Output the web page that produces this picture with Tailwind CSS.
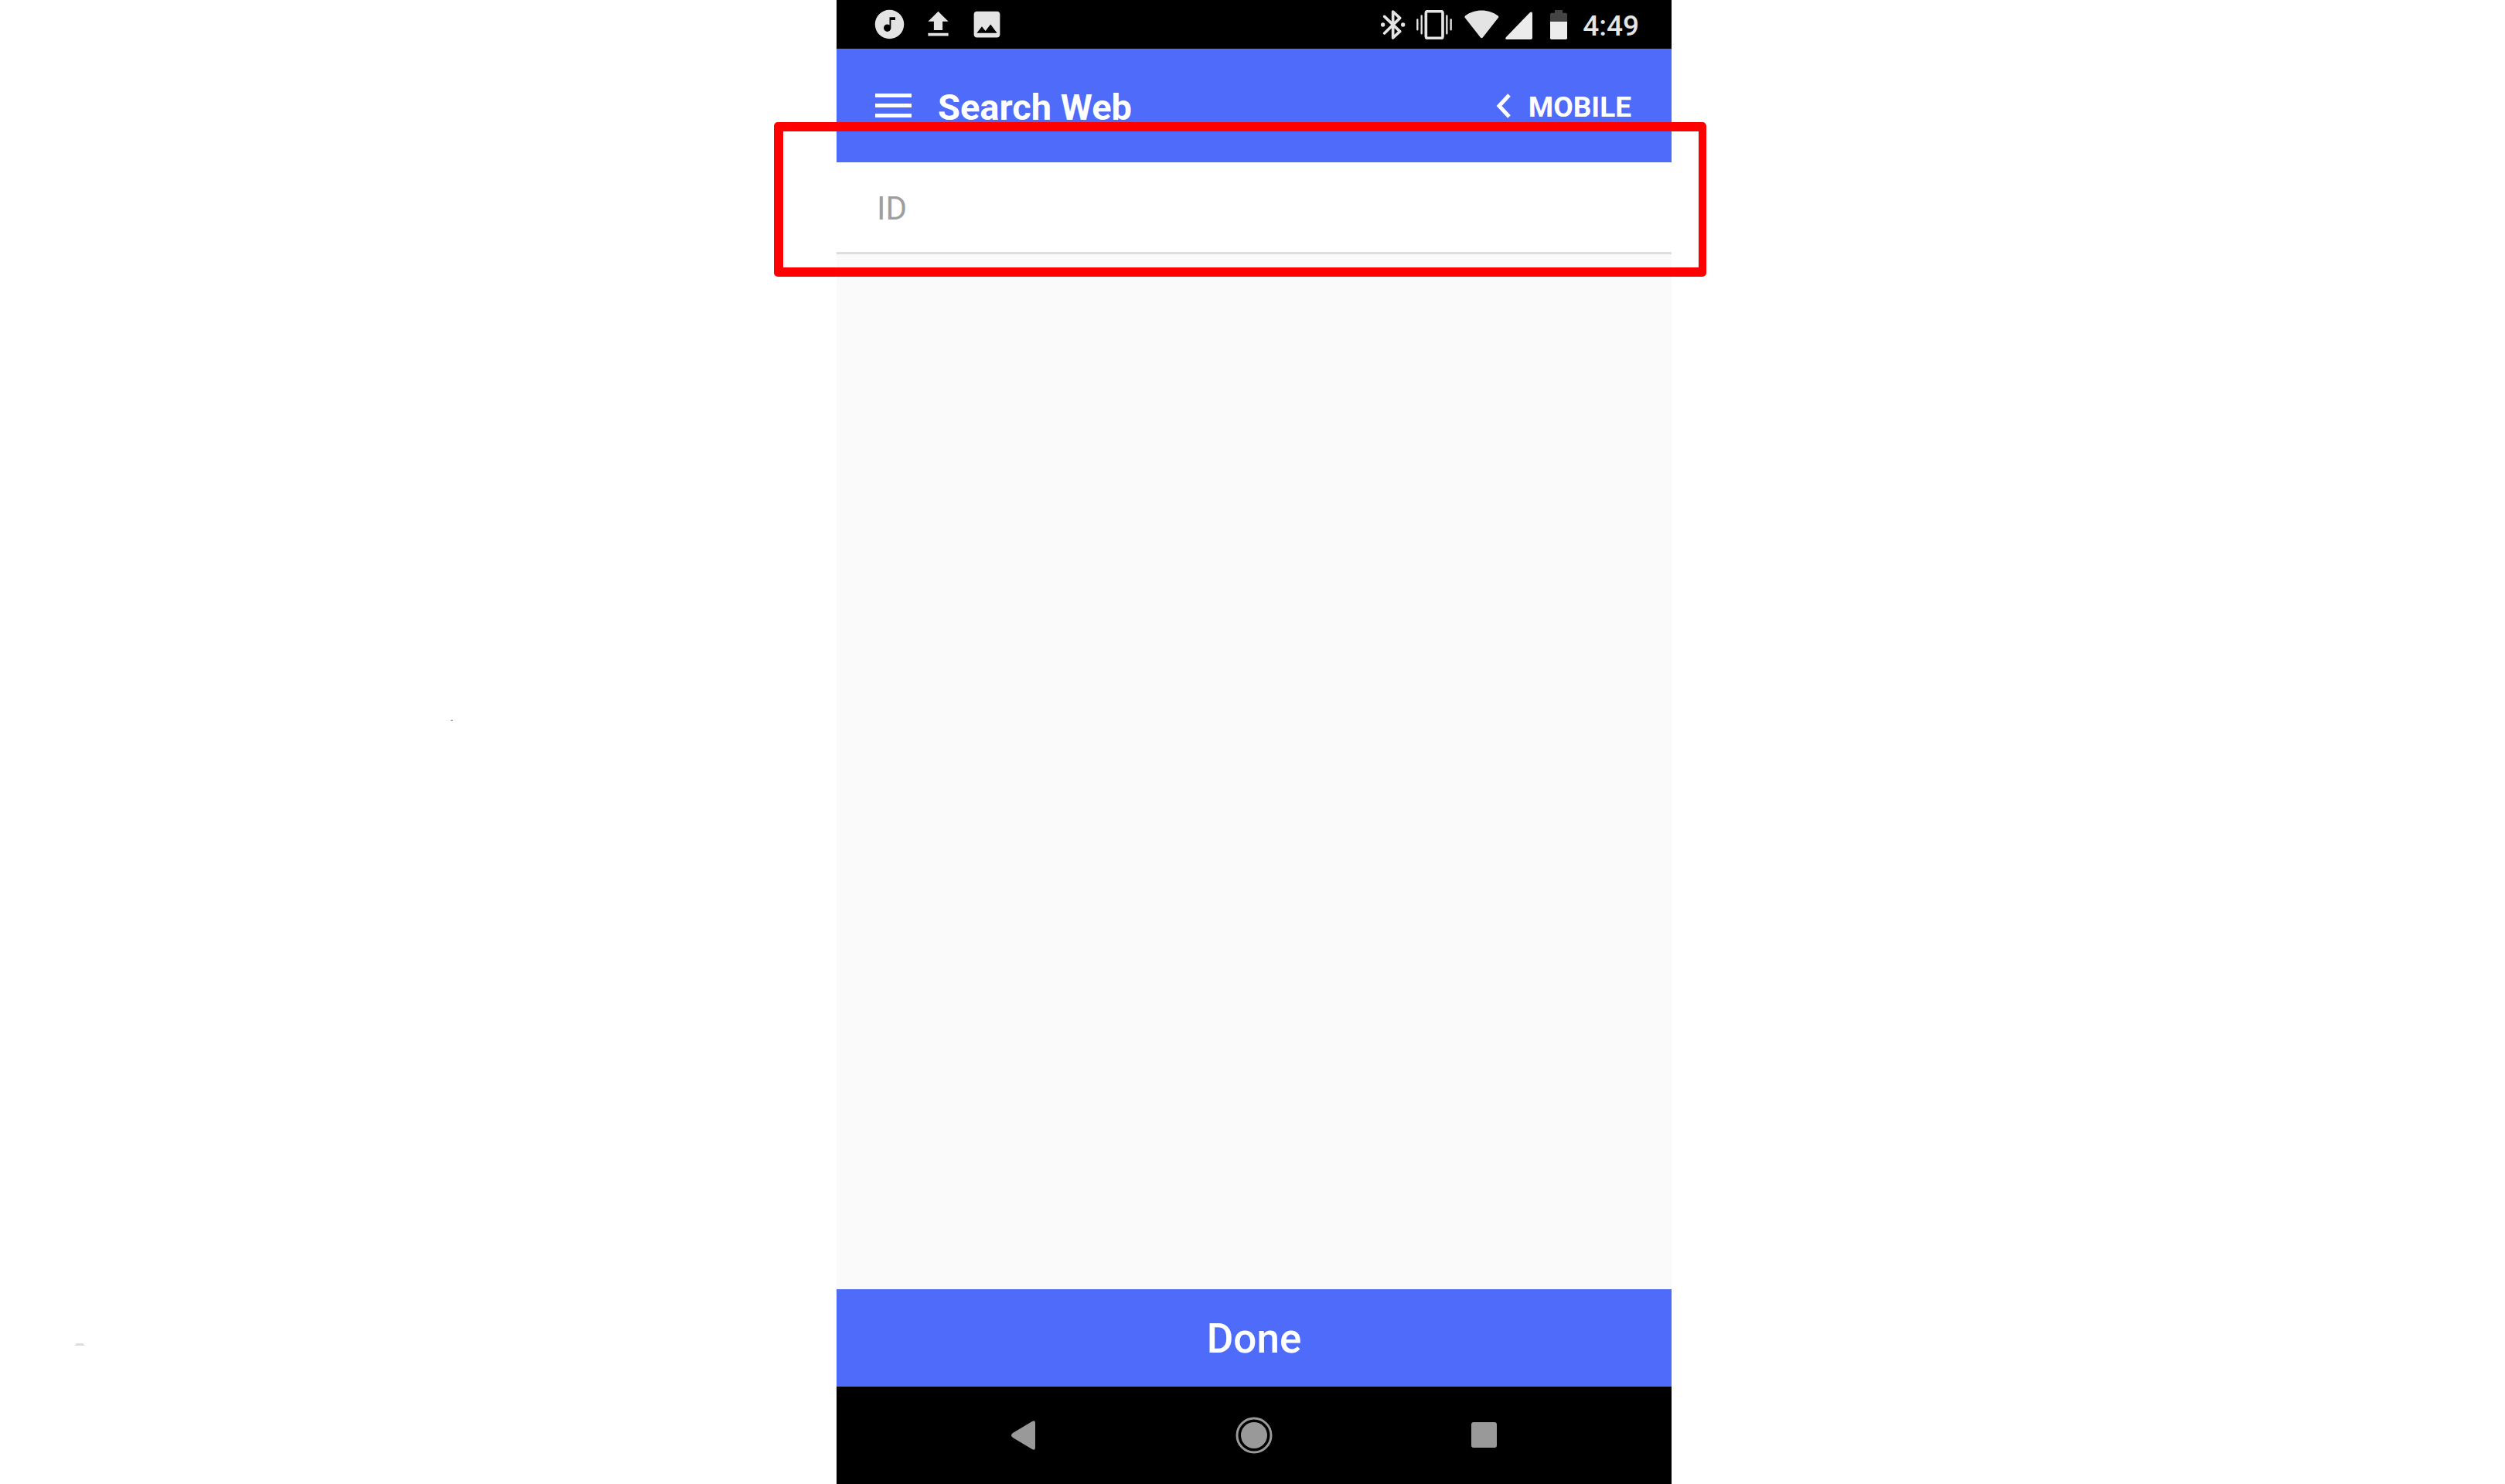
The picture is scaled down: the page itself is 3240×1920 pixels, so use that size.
<!DOCTYPE html>
<html lang="en">
<head>
<meta charset="utf-8">
<meta name="viewport" content="width=device-width, initial-scale=1">
<title>Search Web</title>
<script src="https://cdn.jsdelivr.net/npm/@tailwindcss/browser@4"></script>
</head>
<body class="relative flex min-h-screen justify-center overflow-x-hidden bg-white pl-1 font-['Roboto',sans-serif]">
  <!-- Stray marks on the canvas -->
  <svg class="absolute top-[48.5%] left-[18%] h-[3px] w-[3px]" viewBox="0 0 3 3" aria-hidden="true"><path d="M1 0h1v1h1v1H0V1h1z" fill="#999"/></svg>
  <svg class="absolute top-[90.5%] left-[2.95%] h-[3px] w-[14px]" viewBox="0 0 14 3" aria-hidden="true"><path d="M3 0h8l3 3H0z" fill="#ddd"/></svg>

  <div class="flex w-full max-w-[1080px] flex-col bg-[#fafafa]">
    <!-- Status bar -->
    <div class="flex h-[63px] items-center justify-between bg-black pr-[42px] pl-[46px] text-[#e4e4e4]">
      <div class="flex items-center gap-[18px]">
        <svg class="size-[45px]" viewBox="0 0 24 24" fill="currentColor" role="img" aria-label="Music"><path fill-rule="evenodd" d="M12 2a10 10 0 1 0 0 20 10 10 0 0 0 0-20zm4 7h-3v5.500a2.500 2.500 0 1 1-2.500-2.500c.57 0 1.080.19 1.500.5V7h4z"/></svg>
        <svg class="size-[45px]" viewBox="0 0 24 24" fill="currentColor" role="img" aria-label="Upload"><path d="M9 16h6v-6h4l-7-7-7 7h4zm-4 2h14v2H5z"/></svg>
        <svg class="size-[45px]" viewBox="0 0 24 24" fill="currentColor" role="img" aria-label="Picture"><path d="M21 19V5c0-1.100-.9-2-2-2H5c-1.100 0-2 .9-2 2v14c0 1.100.9 2 2 2h14c1.100 0 2-.9 2-2zM8.500 13.500l2.500 3.010L14.500 12l4.500 6H5l3.500-4.500z"/></svg>
      </div>
      <div class="flex items-center">
        <svg class="mr-3.5 h-[38px] w-8" viewBox="0 0 96 114" fill="none" stroke="currentColor" stroke-width="11" role="img" aria-label="Bluetooth connected"><path stroke-linecap="round" stroke-linejoin="round" d="M14 25 74 83 47 108V6L74 31 14 90"/><g fill="currentColor" stroke="none"><circle cx="8" cy="57" r="8"/><circle cx="86" cy="57" r="8"/></g></svg>
        <svg class="mr-4 h-[38px] w-[46px]" viewBox="0 0 138 114" fill="none" stroke="currentColor" stroke-width="11" role="img" aria-label="Vibrate"><rect x="37" y="5" width="65" height="104" rx="6"/><path stroke-width="7" stroke-linecap="round" d="M4 37v39M20 22v69M118 22v69M134 37v39"/></svg>
        <svg class="mr-2 h-[38px] w-[45px]" viewBox="0 0 135 114" fill="currentColor" role="img" aria-label="Wi-Fi"><path d="M2 29Q0 25 4 22C40-5 94-5 130 22Q135 25 132 29L72 106Q67 112 62 106z"/></svg>
        <svg class="mr-[23px] h-[38px] w-[35px]" viewBox="0 0 105 114" fill="#ececec" role="img" aria-label="Signal"><path d="M105 13V108Q105 114 99 114H5Q-3 112 3 105L95 10Q105 4 105 13z"/></svg>
        <svg class="mr-5 h-[38px] w-[22px]" viewBox="0 0 66 114" role="img" aria-label="Battery"><path fill="#444" d="M18 0h30v11h13q5 0 5 5v29H0V16q0-5 5-5h13z"/><path fill="#ececec" d="M0 45h66v64q0 5-5 5H5q-5 0-5-5z"/></svg>
        <time class="pt-1 text-[37px] leading-none font-medium">4:49</time>
      </div>
    </div>

    <!-- App bar -->
    <header class="flex h-[147px] items-center justify-between bg-[#4e6bfa] pr-[52px] pl-[50px] text-white">
      <div class="flex items-center gap-[34px]">
        <button type="button" aria-label="Menu" class="flex w-[47px] flex-col gap-2">
          <span class="h-[5px] bg-white"></span>
          <span class="h-[5px] bg-white"></span>
          <span class="h-[5px] bg-white"></span>
        </button>
        <h1 class="pt-1 text-[47px] leading-none font-bold">Search Web</h1>
      </div>
      <a href="#mobile" class="flex items-center gap-[22px] text-[37px] leading-none font-bold">
        <svg class="h-8 w-5" viewBox="0 0 20 32" fill="none" stroke="currentColor" stroke-width="5" aria-hidden="true"><path d="M17 2 4 16l13 14"/></svg>
        <span class="pt-1">MOBILE</span>
      </a>
    </header>

    <main class="flex flex-1 flex-col">
      <div class="relative">
        <input aria-label="ID" type="text" placeholder="ID" class="block h-[119px] w-full border-b-[3px] border-[#dedede] bg-white px-[52px] pt-0.5 text-[42px] text-black outline-none placeholder:text-[#9e9e9e]">
        <!-- Callout frame around the field -->
        <div class="pointer-events-none absolute -top-[52px] -right-[45px] -bottom-[29px] -left-[81px] rounded-[5px] border-12 border-r-10 border-[#ff0000]"></div>
      </div>
    </main>

    <button type="button" class="h-[126px] bg-[#4e6bfa] pt-1 text-[53px] font-medium text-white">Done</button>

    <!-- System navigation -->
    <nav class="flex h-[126px] items-center justify-center gap-[250px] bg-black text-[#999]" aria-label="System">
      <button type="button" aria-label="Back"><svg class="size-12" viewBox="0 0 48 48" fill="currentColor"><path d="M35 6q4-2 4 2v32q0 4-4 2L10 27q-4-3 0-6z"/></svg></button>
      <button type="button" aria-label="Home"><svg class="size-12" viewBox="0 0 48 48" fill="currentColor"><circle cx="24" cy="24" r="17"/><circle cx="24" cy="24" r="22" fill="none" stroke="currentColor" stroke-width="3"/></svg></button>
      <button type="button" aria-label="Recent apps"><svg class="size-12" viewBox="0 0 48 48" fill="currentColor"><rect x="7" y="7" width="33" height="33" rx="3"/></svg></button>
    </nav>
  </div>
</body>
</html>
